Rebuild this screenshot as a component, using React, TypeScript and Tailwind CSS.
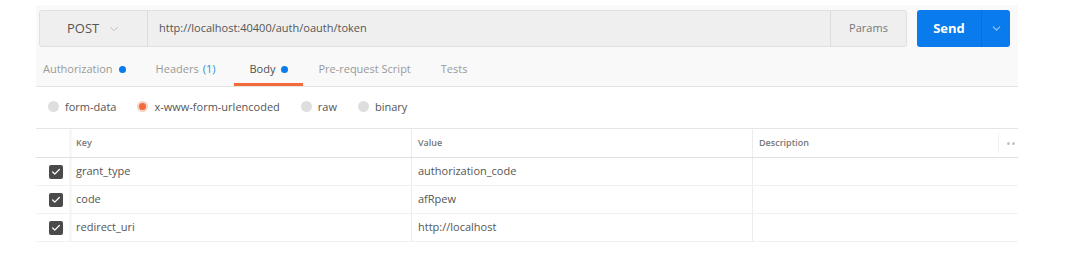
import { Check, ChevronDown } from 'lucide-react';

const font = { fontFamily: '"Open Sans", "Liberation Sans", sans-serif' };

const tabs = [
  { label: 'Authorization', dot: true },
  { label: 'Headers', count: '(1)' },
  { label: 'Body', dot: true, active: true },
  { label: 'Pre-request Script' },
  { label: 'Tests' },
];

const modes = [
  { label: 'form-data' },
  { label: 'x-www-form-urlencoded', selected: true },
  { label: 'raw' },
  { label: 'binary' },
];

const rows = [
  { key: 'grant_type', value: 'authorization_code' },
  { key: 'code', value: 'afRpew' },
  { key: 'redirect_uri', value: 'http://localhost' },
];

export default function App() {
  return (
    <div className="w-[1077px] h-[277px] bg-white" style={font}>
      <div className="ml-[36px] mt-[5px] w-[982px]">
        {/* Request bar + tabs */}
        <div className="bg-[#f9f9f9] border-b border-[#e3e3e3]">
          <div className="flex items-center pt-[5px] pl-[3px] pr-[8px]">
            <div className="flex h-[37px] flex-1 rounded-[3px] border border-[#e0e0e0] bg-[#efefef]">
              <div className="flex w-[108px] items-center gap-[8px] border-r border-[#dcdcdc] pl-[27px]">
                <span className="text-[13px] text-[#555]">POST</span>
                <ChevronDown className="h-[14px] w-[14px] text-[#bdbdbd]" strokeWidth={1.5} />
              </div>
              <div className="flex flex-1 items-center pl-[11px] text-[11px] text-[#555]">
                http://localhost:40400/auth/oauth/token
              </div>
              <div className="flex w-[76px] items-center justify-center border-l border-[#dcdcdc] text-[11px] text-[#777]">
                Params
              </div>
            </div>
            <div className="ml-[10px] flex h-[37px] w-[93px] overflow-hidden rounded-[3px] bg-[#097bed]">
              <div className="flex flex-1 items-center justify-center text-[13px] font-bold text-white">Send</div>
              <div className="flex w-[29px] items-center justify-center border-l border-[#0a6fd4]">
                <ChevronDown className="h-[13px] w-[13px] text-[#9cc8f2]" strokeWidth={2} />
              </div>
            </div>
          </div>
          <div className="mt-[10px] flex pl-[7px]">
            {tabs.map((t, i) => (
              <div
                key={t.label}
                className={`flex h-[29px] items-center border-b-[3px] pb-[1px] text-[11px] ${
                  i === 0 ? 'pl-0 pr-[15px]' : t.count ? 'pl-[15px] pr-[19px]' : 'px-[15px]'
                } ${t.active ? 'border-[#f26b3a] text-[#505050]' : 'border-transparent text-[#9a9a9a]'}`}
              >
                {t.label}
                {t.count && <span className="ml-[4px] text-[#2a8fe0]">{t.count}</span>}
                {t.dot && <span className="ml-[6px] h-[7px] w-[7px] rounded-full bg-[#097bed]" />}
              </div>
            ))}
          </div>
        </div>

        {/* Body type radios */}
        <div className="flex h-[41px] items-center pl-[12px] text-[11px] text-[#555]">
          {modes.map((m) => (
            <label key={m.label} className="mr-[21px] flex items-center">
              <span
                className={`mr-[6px] -mt-[3px] h-[11px] w-[11px] rounded-full ${
                  m.selected ? 'border-[2px] border-[#f4d2c4] bg-[#f26b3a]' : 'bg-[#dedede]'
                }`}
              />
              {m.label}
            </label>
          ))}
        </div>

        {/* Params table */}
        <div className="border-t border-[#e5e5e5] text-[11px]">
          <div className="flex h-[29px] border-b border-[#e0e0e0] text-[9px] font-semibold text-[#777]">
            <div className="w-[33px]" />
            <div className="flex w-[342px] items-center border-l-[3px] border-[#f7f7f7] pl-[4px]">Key</div>
            <div className="flex w-[341px] items-center border-l border-[#ececec] pl-[6px]">Value</div>
            <div className="flex flex-1 items-center border-l border-[#ececec] pl-[6px]">Description</div>
            <div className="my-[4px] flex w-[20px] items-center justify-center gap-[2px] border-l border-[#f0f0f0] pl-[4px]">
              <span className="h-[3px] w-[3px] rounded-full bg-[#c4c4c4]" />
              <span className="h-[3px] w-[3px] rounded-full bg-[#c4c4c4]" />
            </div>
          </div>
          {rows.map((r) => (
            <div key={r.key} className="flex h-[28px] border-b border-[#f1f1f1] text-[#555]">
              <div className="flex w-[33px] items-center pl-[13px]">
                <span className="flex h-[14px] w-[14px] items-center justify-center rounded-[2px] bg-[#4a4a4a]">
                  <Check className="h-[10px] w-[10px] text-white" strokeWidth={3} />
                </span>
              </div>
              <div className="flex w-[342px] items-center border-l-[3px] border-[#f7f7f7] pl-[4px]">{r.key}</div>
              <div className="flex w-[341px] items-center border-l border-[#ececec] pl-[6px]">{r.value}</div>
              <div className="flex-1 border-l border-[#ececec]" />
            </div>
          ))}
        </div>
      </div>
    </div>
  );
}
